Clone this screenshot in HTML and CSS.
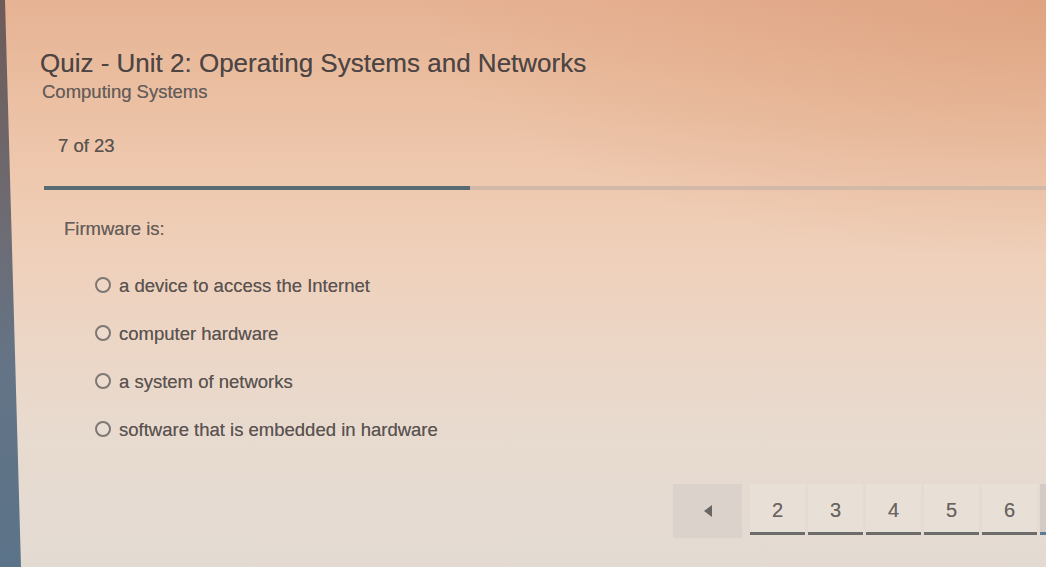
FILE: index.html
```html
<!DOCTYPE html>
<html lang="en">
<head>
<meta charset="utf-8">
<title>Quiz - Unit 2: Operating Systems and Networks</title>
<link rel="stylesheet" href="styles.css">
</head>
<body>
<div class="screen">
  <div class="bezel"></div>
  <main class="quiz">
    <header class="quiz-head">
      <h1 class="quiz-title">Quiz - Unit 2: Operating Systems and Networks</h1>
      <p class="course">Computing Systems</p>
    </header>
    <p class="counter">7 of 23</p>
    <div class="progress"><div class="progress-fill" style="width:42.5%"></div></div>
    <section class="question">
      <p class="prompt">Firmware is:</p>
      <ul class="options">
        <li class="option"><span class="radio"></span><span class="option-text">a device to access the Internet</span></li>
        <li class="option"><span class="radio"></span><span class="option-text">computer hardware</span></li>
        <li class="option"><span class="radio"></span><span class="option-text">a system of networks</span></li>
        <li class="option"><span class="radio"></span><span class="option-text">software that is embedded in hardware</span></li>
      </ul>
    </section>
    <nav class="pager">
      <button class="pager-prev" type="button" aria-label="Previous"><span class="tri"></span></button>
      <div class="pager-pages">
        <span class="page">2</span>
        <span class="page">3</span>
        <span class="page">4</span>
        <span class="page">5</span>
        <span class="page">6</span>
        <span class="page page-current" aria-label="7"></span>
      </div>
    </nav>
  </main>
</div>
</body>
</html>
```

FILE: styles.css
```css
html, body {
  margin: 0;
  padding: 0;
  height: 100%;
  overflow: hidden;
}

body {
  font-family: "Liberation Sans", Arial, sans-serif;
  background: #e9d2c0;
}

.screen {
  display: flex;
  height: 567px;
  overflow: hidden;
  background:
    radial-gradient(ellipse 620px 260px at 100% 0%, rgba(214, 146, 108, 0.45), rgba(214, 146, 108, 0) 100%),
    linear-gradient(180deg, #e6b294 0%, #eabd9f 14%, #eec8ae 30%, #efd0ba 45%, #ecd6c6 60%, #e8dace 75%, #e5dbd2 90%, #e3dad2 100%);
}

.bezel {
  flex: none;
  width: 21px;
  background: linear-gradient(180deg, #6d5b58 0%, #6e6a70 35%, #647486 65%, #5b7389 100%);
  clip-path: polygon(0 0, 5px 0, 21px 100%, 0 100%);
}

.quiz {
  flex: 1;
  min-width: 0;
  padding-left: 19px;
  color: #5c5552;
  text-shadow: 0 0 0.6px rgba(80, 72, 70, 0.6);
}

.quiz-head {
  margin-top: 48px;
}

.quiz-title {
  margin: 0;
  font-size: 26px;
  line-height: 30px;
  font-weight: normal;
  color: #4c4544;
}

.course {
  margin: 3px 0 0 2px;
  font-size: 18.5px;
  line-height: 22px;
  color: #655d5a;
}

.counter {
  margin: 32px 0 0 18px;
  font-size: 18.5px;
  line-height: 22px;
  color: #5a5350;
}

.progress {
  margin: 29px 0 0 4px;
  height: 4px;
  background: #d2b8a6;
}

.progress-fill {
  height: 100%;
  background: #586a72;
}

.question {
  margin: 28px 0 0 24px;
}

.prompt {
  margin: 0;
  font-size: 18.5px;
  line-height: 22px;
  color: #655e5a;
}

.options {
  list-style: none;
  margin: 35px 0 0 31px;
  padding: 0;
  display: flex;
  flex-direction: column;
  gap: 26px;
}

.option {
  display: flex;
  align-items: center;
  gap: 8px;
  height: 22px;
  font-size: 18.5px;
  line-height: 22px;
  color: #5a5350;
}

.radio {
  flex: none;
  box-sizing: border-box;
  width: 16px;
  height: 16px;
  border: 2px solid #7e7773;
  border-radius: 50%;
  background: rgba(255, 255, 255, 0.12);
  margin-top: -2px;
}

.option-text {
  white-space: nowrap;
}

.pager {
  display: flex;
  align-items: flex-start;
  gap: 8px;
  margin: 43px 0 0 633px;
}

.pager-prev {
  flex: none;
  width: 69px;
  height: 54px;
  border: none;
  padding: 0;
  background: #dad2cb;
  display: flex;
  align-items: center;
  justify-content: center;
}

.tri {
  width: 0;
  height: 0;
  border-top: 6px solid transparent;
  border-bottom: 6px solid transparent;
  border-right: 8px solid #6a6664;
}

.pager-pages {
  display: flex;
  gap: 3px;
}

.page {
  flex: none;
  box-sizing: border-box;
  width: 55px;
  height: 51px;
  display: flex;
  align-items: center;
  justify-content: center;
  padding-top: 4px;
  font-size: 20px;
  color: #6a6462;
  background: rgba(240, 234, 228, 0.3);
  border-bottom: 3px solid #6e6c6b;
}

.page-current {
  background: #d3ccc6;
  border-bottom-color: #5d7a93;
}
```
